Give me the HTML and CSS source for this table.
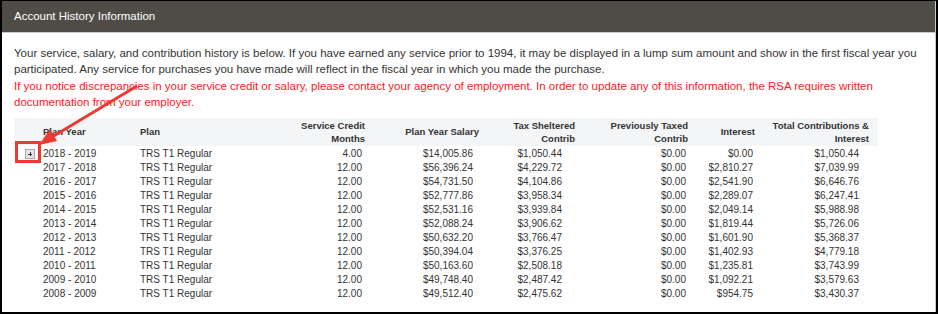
FILE: index.html
```html
<!DOCTYPE html>
<html>
<head>
<meta charset="utf-8">
<link rel="stylesheet" href="styles.css">
</head>
<body>
<div class="frame">
  <div class="panel">
    <div class="panel-head">Account History Information</div>
    <div class="panel-body">
      <p class="intro">Your service, salary, and contribution history is below. If you have earned any service prior to 1994, it may be displayed in a lump sum amount and show in the first fiscal year you participated. Any service for purchases you have made will reflect in the fiscal year in which you made the purchase.<br><span class="warn">If you notice discrepancies in your service credit or salary, please contact your agency of employment. In order to update any of this information, the RSA requires written documentation from your employer.</span></p>
      <table class="history">
        <thead>
          <tr>
            <th class="c-exp"></th>
            <th class="c-year">Plan Year</th>
            <th class="c-plan">Plan</th>
            <th class="c-svc">Service Credit<br>Months</th>
            <th class="c-sal">Plan Year Salary</th>
            <th class="c-tax">Tax Sheltered<br>Contrib</th>
            <th class="c-prev">Previously Taxed<br>Contrib</th>
            <th class="c-int">Interest</th>
            <th class="c-tot">Total Contributions &amp;<br>Interest</th>
          </tr>
        </thead>
        <tbody>
          <tr class="first"><td class="c-exp"><span class="expander"></span></td><td class="c-year">2018 - 2019</td><td class="c-plan">TRS T1 Regular</td><td class="c-svc">4.00</td><td class="c-sal">$14,005.86</td><td class="c-tax">$1,050.44</td><td class="c-prev">$0.00</td><td class="c-int">$0.00</td><td class="c-tot">$1,050.44</td></tr>
          <tr><td class="c-exp"></td><td class="c-year">2017 - 2018</td><td class="c-plan">TRS T1 Regular</td><td class="c-svc">12.00</td><td class="c-sal">$56,396.24</td><td class="c-tax">$4,229.72</td><td class="c-prev">$0.00</td><td class="c-int">$2,810.27</td><td class="c-tot">$7,039.99</td></tr>
          <tr><td class="c-exp"></td><td class="c-year">2016 - 2017</td><td class="c-plan">TRS T1 Regular</td><td class="c-svc">12.00</td><td class="c-sal">$54,731.50</td><td class="c-tax">$4,104.86</td><td class="c-prev">$0.00</td><td class="c-int">$2,541.90</td><td class="c-tot">$6,646.76</td></tr>
          <tr><td class="c-exp"></td><td class="c-year">2015 - 2016</td><td class="c-plan">TRS T1 Regular</td><td class="c-svc">12.00</td><td class="c-sal">$52,777.86</td><td class="c-tax">$3,958.34</td><td class="c-prev">$0.00</td><td class="c-int">$2,289.07</td><td class="c-tot">$6,247.41</td></tr>
          <tr><td class="c-exp"></td><td class="c-year">2014 - 2015</td><td class="c-plan">TRS T1 Regular</td><td class="c-svc">12.00</td><td class="c-sal">$52,531.16</td><td class="c-tax">$3,939.84</td><td class="c-prev">$0.00</td><td class="c-int">$2,049.14</td><td class="c-tot">$5,988.98</td></tr>
          <tr><td class="c-exp"></td><td class="c-year">2013 - 2014</td><td class="c-plan">TRS T1 Regular</td><td class="c-svc">12.00</td><td class="c-sal">$52,088.24</td><td class="c-tax">$3,906.62</td><td class="c-prev">$0.00</td><td class="c-int">$1,819.44</td><td class="c-tot">$5,726.06</td></tr>
          <tr><td class="c-exp"></td><td class="c-year">2012 - 2013</td><td class="c-plan">TRS T1 Regular</td><td class="c-svc">12.00</td><td class="c-sal">$50,632.20</td><td class="c-tax">$3,766.47</td><td class="c-prev">$0.00</td><td class="c-int">$1,601.90</td><td class="c-tot">$5,368.37</td></tr>
          <tr><td class="c-exp"></td><td class="c-year">2011 - 2012</td><td class="c-plan">TRS T1 Regular</td><td class="c-svc">12.00</td><td class="c-sal">$50,394.04</td><td class="c-tax">$3,376.25</td><td class="c-prev">$0.00</td><td class="c-int">$1,402.93</td><td class="c-tot">$4,779.18</td></tr>
          <tr><td class="c-exp"></td><td class="c-year">2010 - 2011</td><td class="c-plan">TRS T1 Regular</td><td class="c-svc">12.00</td><td class="c-sal">$50,163.60</td><td class="c-tax">$2,508.18</td><td class="c-prev">$0.00</td><td class="c-int">$1,235.81</td><td class="c-tot">$3,743.99</td></tr>
          <tr><td class="c-exp"></td><td class="c-year">2009 - 2010</td><td class="c-plan">TRS T1 Regular</td><td class="c-svc">12.00</td><td class="c-sal">$49,748.40</td><td class="c-tax">$2,487.42</td><td class="c-prev">$0.00</td><td class="c-int">$1,092.21</td><td class="c-tot">$3,579.63</td></tr>
          <tr><td class="c-exp"></td><td class="c-year">2008 - 2009</td><td class="c-plan">TRS T1 Regular</td><td class="c-svc">12.00</td><td class="c-sal">$49,512.40</td><td class="c-tax">$2,475.62</td><td class="c-prev">$0.00</td><td class="c-int">$954.75</td><td class="c-tot">$3,430.37</td></tr>
        </tbody>
      </table>
    </div>
  </div>
  <div class="callout-box"></div>
  <svg class="callout-arrow" width="938" height="314" viewBox="0 0 938 314">
    <line x1="137" y1="86" x2="52" y2="137" stroke="#ec3a33" stroke-width="3"/>
    <polygon points="39,145 57,141 50,129" fill="#ec3a33"/>
  </svg>
</div>
</body>
</html>
```
FILE: styles.css
```css
* { box-sizing: border-box; }
html, body { margin: 0; padding: 0; background: #fff; }
body { font-family: "Liberation Sans", Arial, sans-serif; color: #333; }

.frame {
  position: relative;
  width: 938px;
  height: 314px;
  border-top: 1px solid #000;
  border-left: 2px solid #000;
  border-right: 2px solid #000;
  border-bottom: 2px solid #000;
  overflow: hidden;
}

.panel {
  height: 100%;
  border-right: 1px solid #c9c9c9;
}

.panel-head {
  height: 32px;
  background: #4f4c45;
  border-bottom: 1px solid #c9c9c9;
  color: #fff;
  font-size: 11.5px;
  line-height: 31px;
  padding-left: 12px;
}

.panel-body {
  padding: 12px 14px 0 12px;
}

.intro {
  margin: 0;
  font-size: 11.5px;
  line-height: 16.3px;
  color: #333;
}

.warn { color: #f41c1c; }

.history {
  margin-top: 8px;
  width: 864px;
  border-collapse: collapse;
  table-layout: fixed;
  font-size: 10px;
  color: #333;
}

.history thead th {
  background: #f4f5f7;
  font-weight: bold;
  font-size: 9.5px;
  line-height: 13.5px;
  height: 28px;
  padding: 0 5px 0 0;
  vertical-align: middle;
  text-align: right;
  color: #333;
}

.history td {
  height: 14px;
  line-height: 14px;
  padding: 0;
  text-align: right;
  white-space: nowrap;
}

.history tr.first td { height: 15px; padding-top: 1px; }

.history .c-exp { width: 29px; text-align: left; }
.history .c-year { width: 97px; text-align: left; }
.history .c-plan { width: 150px; text-align: left; }
.history .c-svc { width: 80px; }
.history .c-sal { width: 114px; }
.history .c-tax { width: 96px; }
.history .c-prev { width: 113px; }
.history .c-int { width: 67px; }
.history .c-tot { width: 118px; }

.history td.c-svc { padding-right: 8px; }
.history td.c-sal { padding-right: 11px; }
.history td.c-tax { padding-right: 18px; }
.history td.c-prev { padding-right: 7px; }
.history td.c-int { padding-right: 7px; }
.history td.c-tot { padding-right: 19px; }
.history th.c-tot { padding-right: 9px; }

.expander {
  display: block;
  position: relative;
  width: 10px;
  height: 10px;
  margin-left: 11px;
  border: 1px solid #a9a9a9;
  background: #e4e4e4;
}
.expander::before,
.expander::after {
  content: "";
  position: absolute;
  background: #333;
}
.expander::before { left: 2px; top: 3.5px; width: 4px; height: 1px; }
.expander::after { left: 3.5px; top: 2px; width: 1px; height: 4px; }

.callout-box {
  position: absolute;
  left: 13px;
  top: 140px;
  width: 26px;
  height: 22px;
  border: 3px solid #ec3a33;
}

.callout-arrow {
  position: absolute;
  left: -2px;
  top: -1px;
  pointer-events: none;
}
```
